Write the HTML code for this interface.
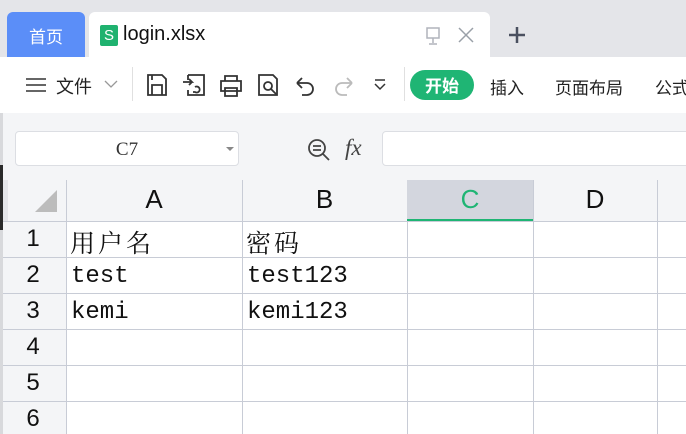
<!DOCTYPE html>
<html><head><meta charset="utf-8"><style>
*{margin:0;padding:0;box-sizing:border-box}
body{width:686px;height:434px;overflow:hidden;background:#e4e5e9;font-family:"Liberation Sans","Noto Sans CJK SC",sans-serif;position:relative}
.a{position:absolute}
.cjk{font-family:"Noto Sans CJK SC",sans-serif}
.ser{font-family:"Liberation Serif","Noto Serif CJK SC",serif}
.mono{font-family:"Liberation Mono","Noto Serif CJK SC",monospace}
.vl{position:absolute;width:1px;background:#c8ccd6}
.hl{position:absolute;height:1px;background:#c8ccd6}
.rn{position:absolute;left:0;width:66px;text-align:center;font-size:24px;color:#111}
.ct{position:absolute;font-size:24px;color:#111}
.zh{position:absolute;font-size:25px;color:#111;letter-spacing:3px;font-family:"Noto Serif CJK SC",serif}
svg{position:absolute}
</style></head><body>
<!-- tabs -->
<div class="a cjk" style="left:7px;top:12px;width:78px;height:46px;background:#5b8ef8;border-radius:6px 6px 0 0;color:#fff;font-size:17px;text-align:center;line-height:48px">首页</div>
<div class="a" style="left:89px;top:12px;width:401px;height:46px;background:#fff;border-radius:6px 6px 0 0"></div>
<div class="a" style="left:100px;top:25px;width:18px;height:21px;background:#1fb26f;border-radius:2px;color:#fff;font-size:15px;text-align:center;line-height:21px">S</div>
<div class="a" style="left:123px;top:23px;font-size:20px;color:#111">login.xlsx</div>
<svg style="left:426px;top:27px" width="14" height="20" viewBox="0 0 14 20"><rect x="1" y="1" width="12" height="10" fill="none" stroke="#b0b4bc" stroke-width="1.5"/><path d="M7 11v5M3 17h8" stroke="#b0b4bc" stroke-width="1.5"/></svg>
<svg style="left:458px;top:27px" width="16" height="16" viewBox="0 0 16 16"><path d="M1 1L15 15M15 1L1 15" stroke="#9aa0a8" stroke-width="1.5"/></svg>
<svg style="left:508px;top:26px" width="18" height="18" viewBox="0 0 18 18"><path d="M9 1v16M1 9h16" stroke="#4a5060" stroke-width="2.5"/></svg>
<!-- toolbar -->
<div class="a" style="left:0;top:57px;width:686px;height:56px;background:#fff"></div>
<svg style="left:26px;top:77px" width="20" height="16" viewBox="0 0 20 16"><path d="M0 2h20M0 8h20M0 14h20" stroke="#333" stroke-width="1.5"/></svg>
<div class="a cjk" style="left:56px;top:73px;font-size:18px;color:#222">文件</div>
<svg style="left:104px;top:80px" width="14" height="9" viewBox="0 0 14 9"><path d="M1 1l6 6 6-6" stroke="#999" fill="none" stroke-width="1.3"/></svg>
<div class="a" style="left:132px;top:67px;width:1px;height:34px;background:#e0e0e0"></div>
<svg style="left:146px;top:73px" width="22" height="24" viewBox="0 0 22 24" fill="none" stroke="#333" stroke-width="1.8"><path d="M2 2h14l4 4v16H2z"/><path d="M6 22V12h10v10M6 2v5"/></svg>
<svg style="left:182px;top:73px" width="24" height="24" viewBox="0 0 24 24" fill="none" stroke="#333" stroke-width="1.8"><path d="M6 2h16v20H6v-5M6 2v5"/><path d="M1 9h9l-3-3M10 9l-3 3M13 14a3 3 0 1 1 0 5h-2"/></svg>
<svg style="left:219px;top:74px" width="24" height="24" viewBox="0 0 24 24" fill="none" stroke="#333" stroke-width="1.8"><path d="M6 7V2h12v5M2 7h20v10H2zM6 14h12v8H6z"/></svg>
<svg style="left:257px;top:73px" width="24" height="24" viewBox="0 0 24 24" fill="none" stroke="#333" stroke-width="1.8"><path d="M2 2h14l4 4v16H2z"/><circle cx="11" cy="13" r="4"/><path d="M14 16l5 5"/></svg>
<svg style="left:294px;top:75px" width="22" height="22" viewBox="0 0 22 22" fill="none" stroke="#333" stroke-width="1.8"><path d="M3 8h10a6 6 0 0 1 0 12H8M3 8l5-5M3 8l5 5"/></svg>
<svg style="left:333px;top:75px" width="22" height="22" viewBox="0 0 22 22" fill="none" stroke="#bbb" stroke-width="1.8"><path d="M19 8H9a6 6 0 0 0 0 12h5M19 8l-5-5M19 8l-5 5"/></svg>
<svg style="left:373px;top:78px" width="14" height="14" viewBox="0 0 14 14" fill="none" stroke="#333" stroke-width="1.5"><path d="M2 2h10M2 6l5 5 5-5"/></svg>
<div class="a" style="left:404px;top:67px;width:1px;height:34px;background:#e0e0e0"></div>
<div class="a cjk" style="left:410px;top:70px;width:64px;height:30px;background:#1fb574;border-radius:15px;color:#fff;font-size:17px;font-weight:bold;text-align:center;line-height:30px">开始</div>
<div class="a cjk" style="left:490px;top:74px;font-size:17px;color:#222">插入</div>
<div class="a cjk" style="left:555px;top:74px;font-size:17px;color:#222">页面布局</div>
<div class="a cjk" style="left:655px;top:74px;font-size:17px;color:#222;white-space:nowrap">公式</div>
<!-- formula area -->
<div class="a" style="left:0;top:113px;width:686px;height:67px;background:#f4f5f7"></div>
<div class="a" style="left:0;top:113px;width:3px;height:321px;background:#d8d9dc"></div>
<div class="a" style="left:0;top:165px;width:3px;height:65px;background:#2a2a2a"></div>
<div class="a ser" style="left:15px;top:131px;width:224px;height:35px;background:#fff;border:1px solid #dcdee3;border-radius:4px;text-align:center;line-height:35px;font-size:19px;color:#333">C7</div>
<div class="a" style="left:226px;top:147px;border:4px solid transparent;border-top:4px solid #888"></div>
<svg style="left:307px;top:138px" width="24" height="24" viewBox="0 0 24 24" fill="none" stroke="#444" stroke-width="1.8"><circle cx="10" cy="10" r="8"/><path d="M6 8h8M6 12h8M16 16l6 6"/></svg>
<div class="a ser" style="left:345px;top:135px;font-size:23px;font-style:italic;color:#444">fx</div>
<div class="a" style="left:382px;top:131px;width:310px;height:35px;background:#fff;border:1px solid #dcdee3;border-radius:4px"></div>
<!-- grid -->
<div class="a" style="left:8px;top:180px;width:678px;height:41px;background:#f4f5f7"></div>
<div class="a" style="left:3px;top:221px;width:63px;height:213px;background:#f4f5f7"></div>
<div class="a" style="left:66px;top:221px;width:620px;height:213px;background:#fff"></div>
<div class="a" style="left:407px;top:180px;width:126px;height:41px;background:#d3d6de"></div>
<div class="a" style="left:407px;top:219px;width:126px;height:3px;background:#1fb574"></div>
<svg style="left:35px;top:190px" width="22" height="22" viewBox="0 0 22 22"><path d="M22 0V22H0z" fill="#bcbcbc"/></svg>
<div class="vl" style="left:66px;top:180px;height:254px"></div>
<div class="vl" style="left:242px;top:180px;height:254px"></div>
<div class="vl" style="left:407px;top:221px;height:213px"></div>
<div class="vl" style="left:533px;top:180px;height:254px"></div>
<div class="vl" style="left:657px;top:180px;height:254px"></div>
<div class="hl" style="left:3px;top:221px;width:683px"></div>
<div class="hl" style="left:3px;top:257px;width:683px"></div>
<div class="hl" style="left:3px;top:293px;width:683px"></div>
<div class="hl" style="left:3px;top:329px;width:683px"></div>
<div class="hl" style="left:3px;top:365px;width:683px"></div>
<div class="hl" style="left:3px;top:401px;width:683px"></div>
<div class="a" style="left:66px;top:184px;width:176px;text-align:center;font-size:26px;color:#111">A</div>
<div class="a" style="left:242px;top:184px;width:165px;text-align:center;font-size:26px;color:#111">B</div>
<div class="a" style="left:407px;top:184px;width:126px;text-align:center;font-size:26px;color:#1fb574">C</div>
<div class="a" style="left:533px;top:184px;width:124px;text-align:center;font-size:26px;color:#111">D</div>
<div class="rn" style="top:225px">1</div>
<div class="rn" style="top:261px">2</div>
<div class="rn" style="top:297px">3</div>
<div class="rn" style="top:333px">4</div>
<div class="rn" style="top:369px">5</div>
<div class="rn" style="top:405px">6</div>
<div class="zh" style="left:70px;top:224px">用户名</div>
<div class="zh" style="left:246px;top:224px">密码</div>
<div class="ct mono" style="left:71px;top:263px">test</div>
<div class="ct mono" style="left:247px;top:263px">test123</div>
<div class="ct mono" style="left:71px;top:299px">kemi</div>
<div class="ct mono" style="left:247px;top:299px">kemi123</div>
</body></html>
